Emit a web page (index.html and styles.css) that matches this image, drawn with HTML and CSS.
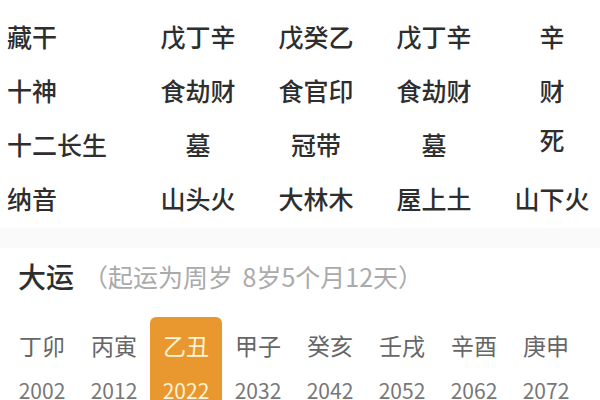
FILE: index.html
```html
<!DOCTYPE html>
<html lang="zh">
<head>
<meta charset="utf-8">
<link rel="stylesheet" href="styles.css">
</head>
<body>
<div class="page">
  <div class="table">
    <div class="label">藏干</div><div class="cell">戊丁辛</div><div class="cell">戊癸乙</div><div class="cell">戊丁辛</div><div class="cell">辛</div>
    <div class="label">十神</div><div class="cell">食劫财</div><div class="cell">食官印</div><div class="cell">食劫财</div><div class="cell">财</div>
    <div class="label">十二长生</div><div class="cell">墓</div><div class="cell">冠带</div><div class="cell">墓</div><div class="cell up">死</div>
    <div class="label">纳音</div><div class="cell">山头火</div><div class="cell">大林木</div><div class="cell">屋上土</div><div class="cell">山下火</div>
  </div>
  <div class="band"></div>
  <div class="heading">
    <span class="title">大运</span>
    <span class="sub">（起运为周岁 8岁5个月12天）</span>
  </div>
  <div class="dayun">
    <div class="item"><div class="gz">丁卯</div><div class="yr">2002</div></div>
    <div class="item"><div class="gz">丙寅</div><div class="yr">2012</div></div>
    <div class="item active"><div class="gz">乙丑</div><div class="yr">2022</div></div>
    <div class="item"><div class="gz">甲子</div><div class="yr">2032</div></div>
    <div class="item"><div class="gz">癸亥</div><div class="yr">2042</div></div>
    <div class="item"><div class="gz">壬戌</div><div class="yr">2052</div></div>
    <div class="item"><div class="gz">辛酉</div><div class="yr">2062</div></div>
    <div class="item"><div class="gz">庚申</div><div class="yr">2072</div></div>
  </div>
</div>
</body>
</html>
```

FILE: styles.css
```css
html, body {
  margin: 0;
  padding: 0;
  background: #ffffff;
}
.page {
  width: 600px;
  height: 400px;
  overflow: hidden;
  font-family: "Noto Sans CJK SC", "Noto Sans", sans-serif;
}
.table {
  display: grid;
  grid-template-columns: 139px repeat(4, 118px);
  grid-auto-rows: 54px;
  padding-top: 9px;
  color: #2e2e2e;
  font-size: 25px;
  font-weight: 500;
}
.label {
  padding-left: 7px;
  line-height: 54px;
  white-space: nowrap;
}
.cell {
  text-align: center;
  line-height: 54px;
  white-space: nowrap;
}
.cell.up {
  line-height: 44px;
}
.band {
  margin-top: 3px;
  height: 20px;
  background: #fafafa;
}
.heading {
  display: flex;
  align-items: center;
  height: 40px;
  margin-top: 8px;
  padding-left: 18px;
}
.title {
  font-size: 28px;
  font-weight: 500;
  color: #2e2e2e;
}
.sub {
  margin-left: 9px;
  font-size: 25px;
  word-spacing: 4px;
  color: #aaaaaa;
  white-space: nowrap;
}
.dayun {
  display: flex;
  margin-top: 21px;
  padding-left: 6px;
}
.item {
  width: 72px;
  height: 100px;
  padding-top: 12px;
  box-sizing: border-box;
  text-align: center;
  color: #666666;
  border-radius: 6px;
}
.gz {
  font-size: 23px;
  line-height: 32px;
}
.yr {
  margin-top: 14px;
  font-size: 21px;
  line-height: 30px;
  color: #777777;
}
.item.active {
  background: #e9982f;
}
.item.active .gz,
.item.active .yr {
  color: #fff4d8;
}
```
